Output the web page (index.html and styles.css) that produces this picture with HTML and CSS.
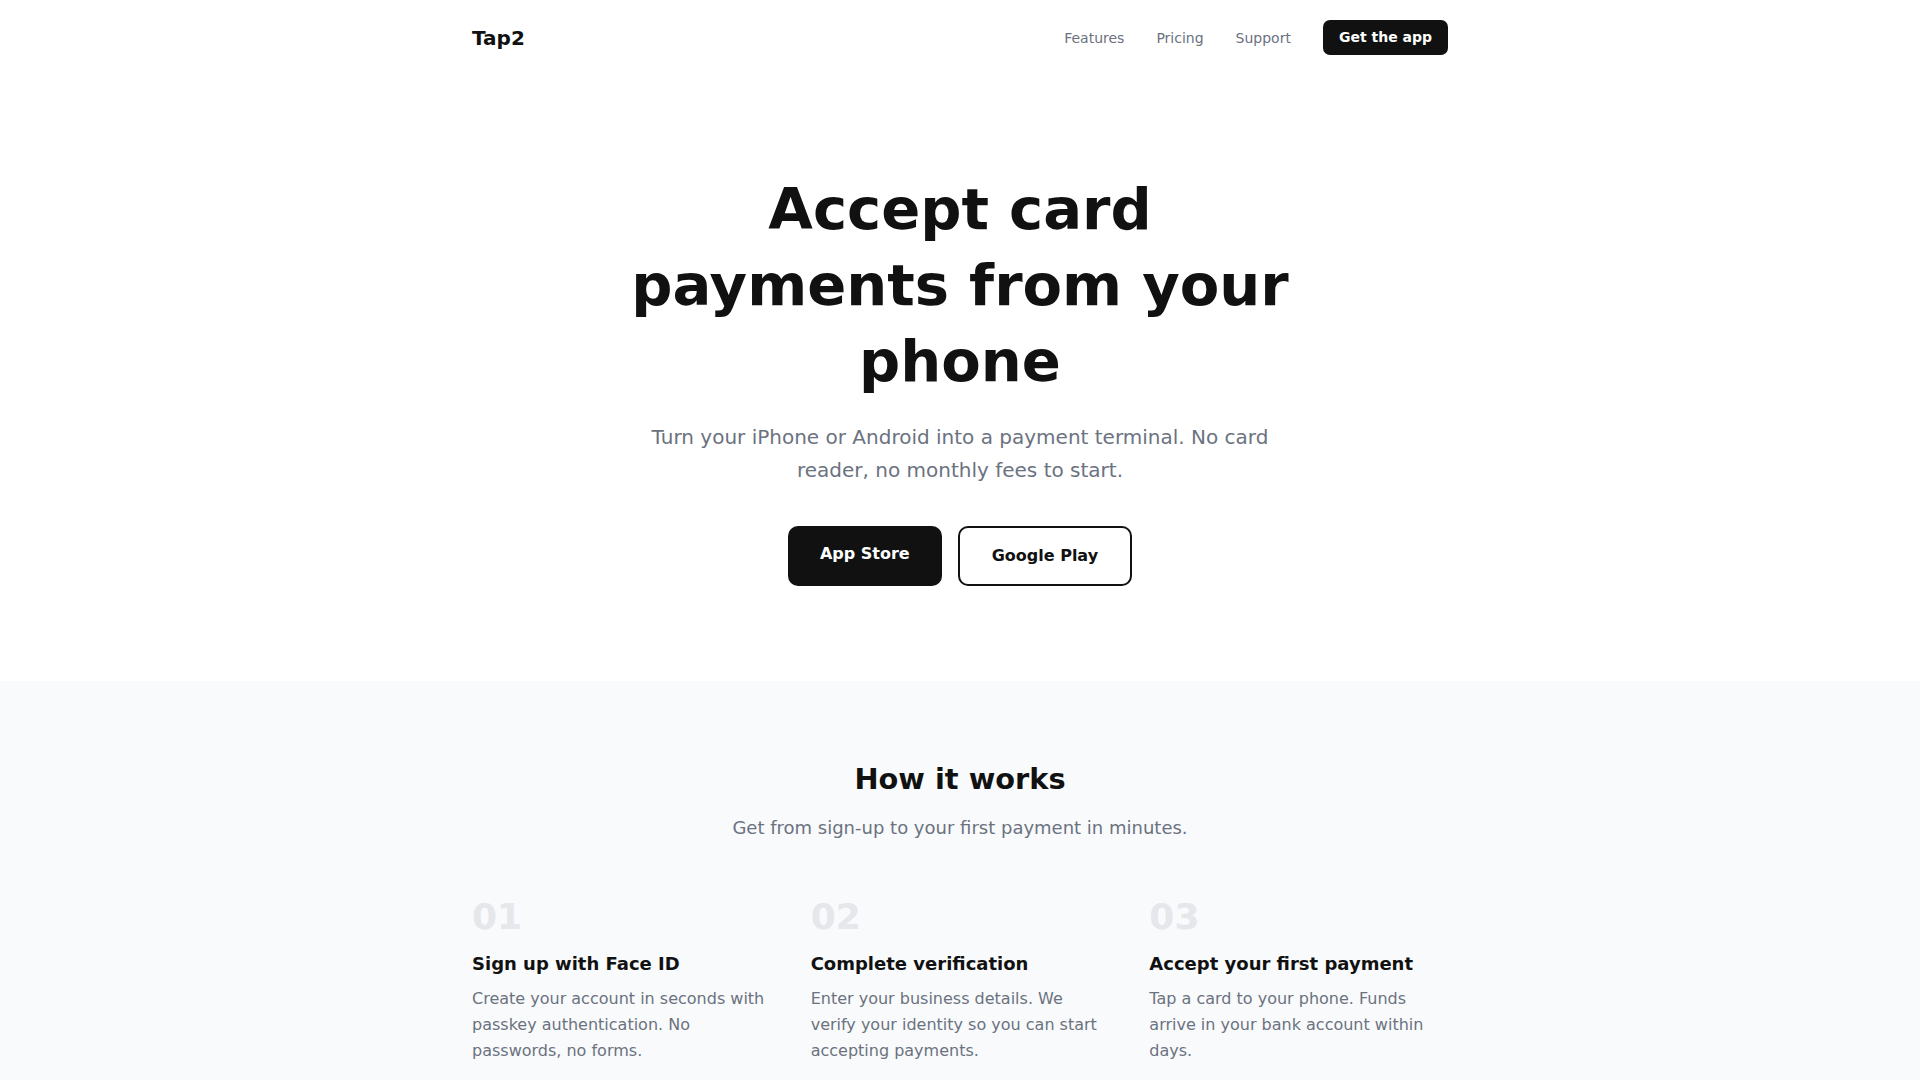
FILE: index.html
```html
<!DOCTYPE html>
<html lang="en">
<head>
<meta charset="utf-8">
<title>Tap2 — Accept card payments from your phone</title>
<link rel="stylesheet" href="styles.css">
</head>
<body>
<header class="nav">
  <div class="nav-inner">
    <a class="logo" href="#">Tap2</a>
    <nav class="nav-links">
      <a href="#">Features</a>
      <a href="#">Pricing</a>
      <a href="#">Support</a>
      <a class="nav-cta" href="#">Get the app</a>
    </nav>
  </div>
</header>
<main>
  <section class="hero">
    <h1 class="hero-title">Accept card payments from your phone</h1>
    <p class="hero-sub">Turn your iPhone or Android into a payment terminal. No card reader, no monthly fees to start.</p>
    <div class="hero-actions">
      <a class="btn btn-dark" href="#">App Store</a>
      <a class="btn btn-outline" href="#">Google Play</a>
    </div>
  </section>
  <section class="how">
    <div class="how-inner">
      <h2 class="how-title">How it works</h2>
      <p class="how-sub">Get from sign-up to your first payment in minutes.</p>
      <div class="steps">
        <div class="step">
          <div class="step-num">01</div>
          <h3 class="step-title">Sign up with Face ID</h3>
          <p class="step-text">Create your account in seconds with passkey authentication. No passwords, no forms.</p>
        </div>
        <div class="step">
          <div class="step-num">02</div>
          <h3 class="step-title">Complete verification</h3>
          <p class="step-text">Enter your business details. We verify your identity so you can start accepting payments.</p>
        </div>
        <div class="step">
          <div class="step-num">03</div>
          <h3 class="step-title">Accept your first payment</h3>
          <p class="step-text">Tap a card to your phone. Funds arrive in your bank account within days.</p>
        </div>
      </div>
    </div>
  </section>
</main>
</body>
</html>
```

FILE: styles.css
```css
* { box-sizing: border-box; }
html, body { margin: 0; padding: 0; }
body {
  font-family: "DejaVu Sans", sans-serif;
  color: #111111;
  background: #ffffff;
}
a { text-decoration: none; color: inherit; }
h1, h2, h3, p { margin: 0; }

.nav-inner {
  max-width: 1024px;
  margin: 0 auto;
  padding: 20px 24px;
  display: flex;
  align-items: center;
  justify-content: space-between;
}
.logo {
  font-size: 20px;
  font-weight: 700;
  color: #111111;
}
.nav-links {
  display: flex;
  align-items: center;
  gap: 32px;
}
.nav-links a {
  font-size: 14px;
  color: #6b7280;
}
.nav-links a.nav-cta {
  background: #111111;
  color: #ffffff;
  font-weight: 700;
  font-size: 14px;
  line-height: 17px;
  padding: 9px 16px;
  border-radius: 7px;
}

.hero {
  padding: 97px 24px 95px;
  text-align: center;
}
.hero-title {
  font-size: 57.6px;
  line-height: 76px;
  font-weight: 700;
  max-width: 700px;
  margin: 0 auto;
  color: #111111;
}
.hero-sub {
  font-size: 20px;
  line-height: 33px;
  color: #6b7280;
  max-width: 640px;
  margin: 21px auto 0;
}
.hero-actions {
  display: flex;
  justify-content: center;
  gap: 16px;
  margin-top: 39px;
}
.btn {
  font-size: 16px;
  line-height: 20px;
  font-weight: 700;
  border-radius: 10px;
}
.btn-dark {
  background: #111111;
  color: #ffffff;
  padding: 18px 32px 22px;
}
.btn-outline {
  background: #ffffff;
  color: #111111;
  border: 2px solid #111111;
  padding: 18px 32px;
}

.how {
  background: #f9fafb;
  padding: 80px 24px 80px;
}
.how-inner {
  max-width: 976px;
  margin: 0 auto;
}
.how-title {
  text-align: center;
  font-size: 28.8px;
  line-height: 36px;
  font-weight: 700;
  color: #111111;
}
.how-sub {
  text-align: center;
  font-size: 18px;
  line-height: 28.8px;
  color: #6b7280;
  margin-top: 17px;
}
.steps {
  display: grid;
  grid-template-columns: repeat(3, 1fr);
  gap: 40px;
  margin-top: 56px;
}
.step-num {
  font-size: 36px;
  line-height: 36px;
  font-weight: 700;
  color: #e5e7eb;
}
.step-title {
  font-size: 18px;
  line-height: 27px;
  font-weight: 700;
  color: #111111;
  margin-top: 15px;
}
.step-text {
  font-size: 16px;
  line-height: 26px;
  color: #6b7280;
  margin-top: 9.5px;
}
```
